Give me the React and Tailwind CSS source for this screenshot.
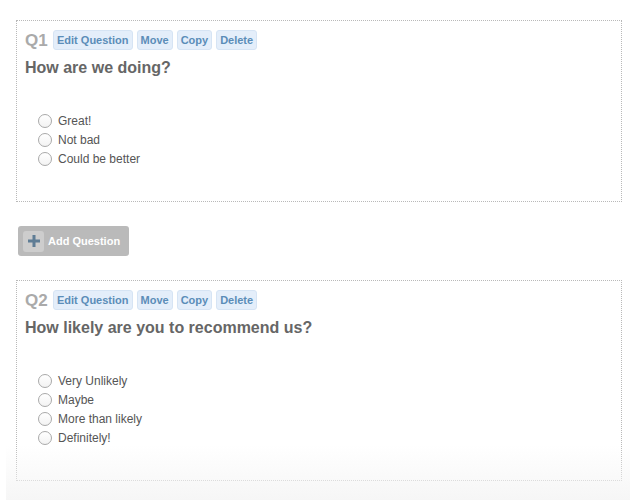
import React from "react";

const font = { fontFamily: '"Liberation Sans", Arial, Helvetica, sans-serif' };

function ActionBtn({ children }) {
  return (
    <span className="inline-flex items-center h-[20px] px-[3px] rounded-[3px] bg-[#e4eefa] border border-[#d6e4f4] text-[11px] font-bold text-[#5b8db8] leading-none">
      {children}
    </span>
  );
}

function Radio({ label }) {
  return (
    <div className="flex items-center h-[19px]">
      <span className="w-[14px] h-[14px] rounded-full border border-[#a9a9a9] bg-gradient-to-b from-white to-[#f3f3f3] mr-[6px] ml-[13px]" />
      <span className="text-[12px] text-[#555]">{label}</span>
    </div>
  );
}

function Question({ num, title, options }) {
  return (
    <div className="border border-dotted border-[#b9b9b9] ml-[10px] mr-[8px] pt-[9px] pl-[8px] pb-[33px]">
      <div className="flex items-center gap-[4px]">
        <span className="text-[17px] font-bold text-[#aaa] w-[24px] leading-none">{num}</span>
        <ActionBtn>Edit Question</ActionBtn>
        <ActionBtn>Move</ActionBtn>
        <ActionBtn>Copy</ActionBtn>
        <ActionBtn>Delete</ActionBtn>
      </div>
      <div className="mt-[8px] text-[16px] leading-[20px] font-bold text-[#666]">{title}</div>
      <div className="mt-[33px] flex flex-col">
        {options.map((o) => (
          <Radio key={o} label={o} />
        ))}
      </div>
    </div>
  );
}

export default function App() {
  return (
    <div className="relative w-[640px] h-[500px] bg-white overflow-hidden" style={font}>
      <div className="pt-[20px] pl-[6px] w-[630px]">
        <Question num="Q1" title="How are we doing?" options={["Great!", "Not bad", "Could be better"]} />
        <div className="mt-[24px] mb-[24px] ml-[12px]">
          <div className="inline-flex items-center h-[30px] w-[111px] rounded-[3px] bg-[#bababa] pl-[5px]">
            <span className="w-[21px] h-[21px] rounded-[3px] bg-[#cdcdcd] flex items-center justify-center">
              <svg width="12" height="12" viewBox="0 0 12 12">
                <rect x="4.5" y="0" width="3" height="12" fill="#5f7d95" />
                <rect x="0" y="4.5" width="12" height="3" fill="#5f7d95" />
              </svg>
            </span>
            <span className="ml-[4px] text-[11px] font-bold text-white">Add Question</span>
          </div>
        </div>
        <Question
          num="Q2"
          title="How likely are you to recommend us?"
          options={["Very Unlikely", "Maybe", "More than likely", "Definitely!"]}
        />
      </div>
      <div className="absolute left-[6px] w-[624px] top-[445px] h-[55px] bg-gradient-to-b from-white/0 to-[#f5f5f5]/90 pointer-events-none" />
    </div>
  );
}
